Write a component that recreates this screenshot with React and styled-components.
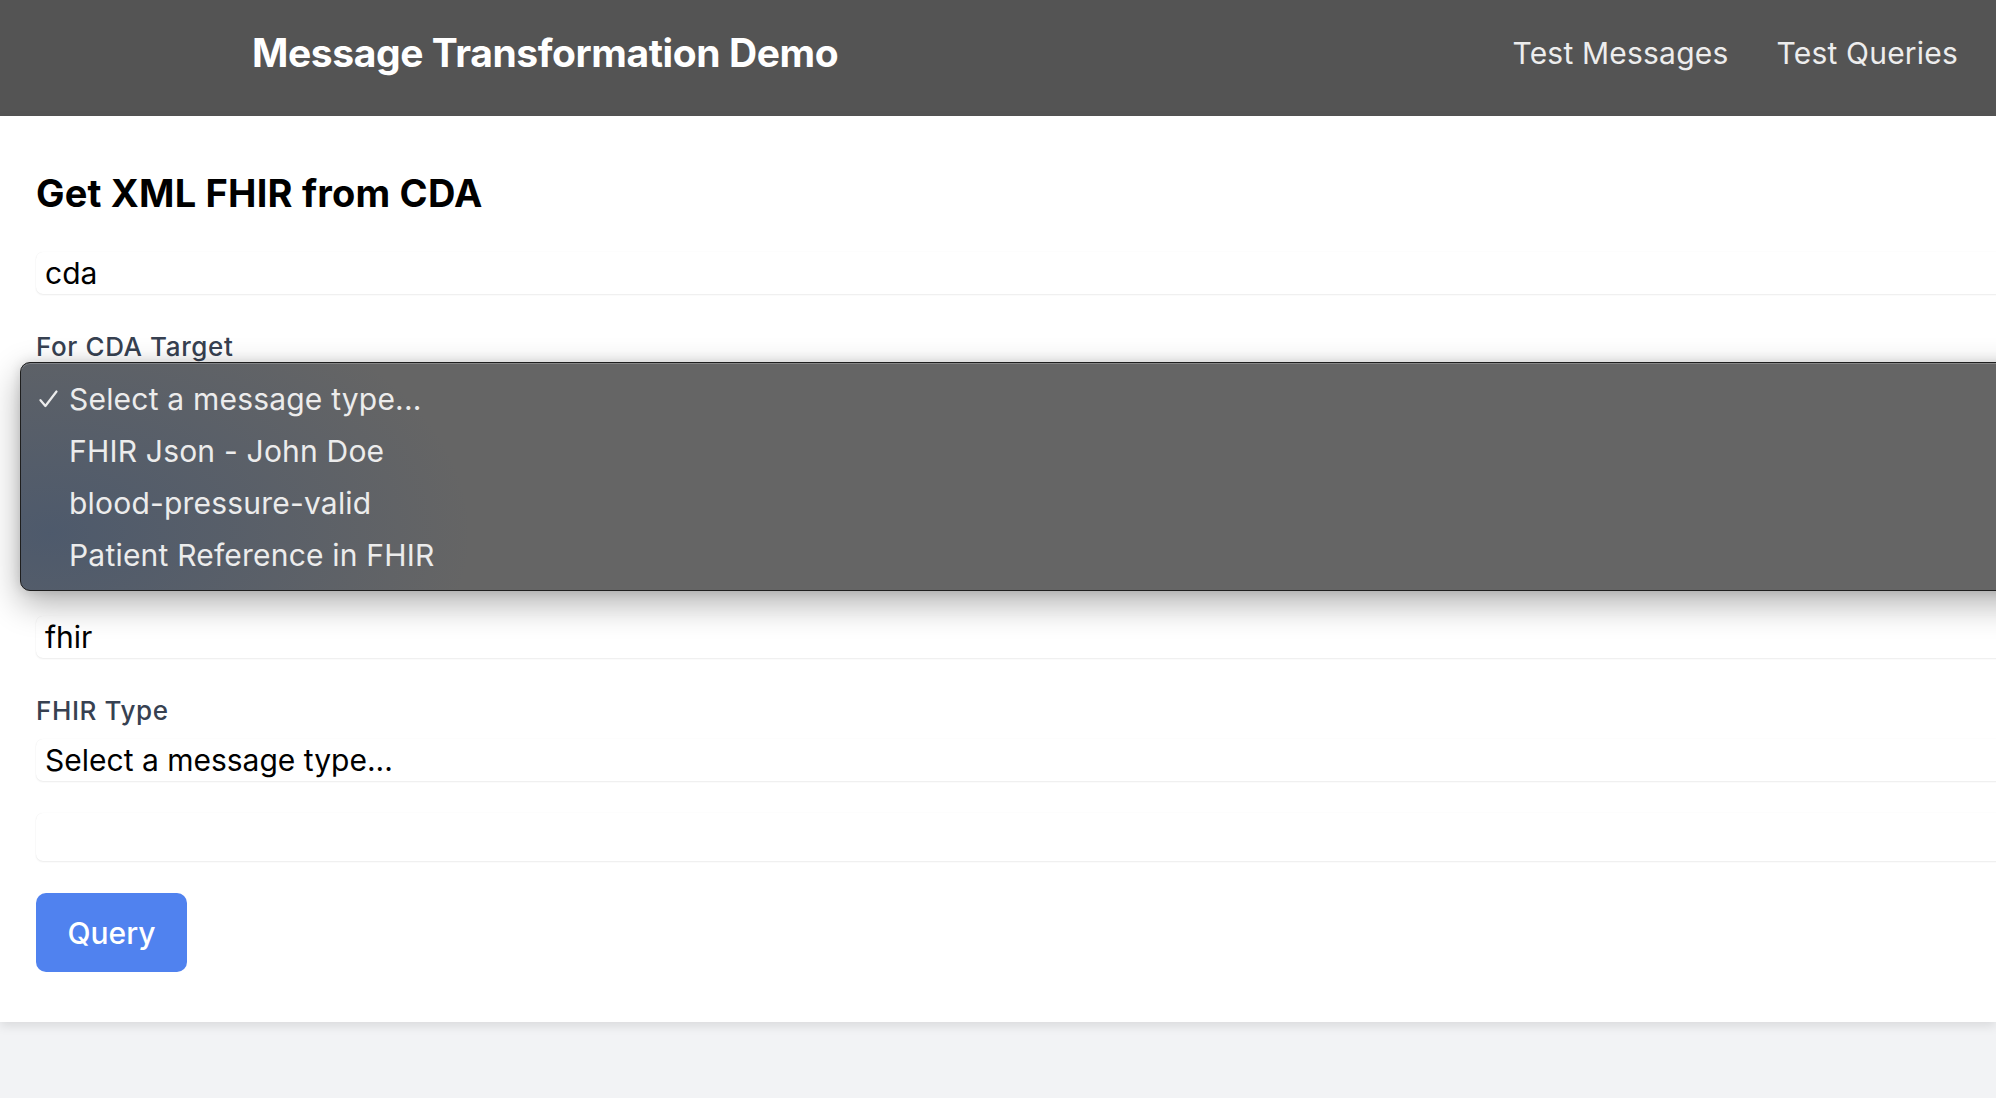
import React from 'react';
import styled, { createGlobalStyle } from 'styled-components';

const GlobalStyle = createGlobalStyle`
    html, body {
        margin: 0;
        padding: 0;
        background-color: #f2f3f5;
        font-family: Inter, "Noto Sans", "Liberation Sans", sans-serif;
        overflow: hidden;
    }
    * {
        box-sizing: border-box;
    }
`;

const cdaOptions = [
    'Select a message type...',
    'FHIR Json - John Doe',
    'blood-pressure-valid',
    'Patient Reference in FHIR',
];

const CheckIcon = () => (
    <svg width="19" height="18" viewBox="0 0 19 18" fill="none">
        <path d="M1.5 10.2 L6.4 16 L17.5 1.5" stroke="#ececec" strokeWidth="2.2" strokeLinecap="round" strokeLinejoin="round" />
    </svg>
);

const App = () => {
    return (
        <Page>
            <GlobalStyle />
            <Header>
                <Title>Message Transformation Demo</Title>
                <NavLinks>
                    <NavLink href="#messages">Test Messages</NavLink>
                    <NavLink href="#queries">Test Queries</NavLink>
                </NavLinks>
            </Header>
            <Card>
                <Heading>Get XML FHIR from CDA</Heading>
                <Field>cda</Field>
                <Label>For CDA Target</Label>
                <SelectArea>
                    <Field>Select a message type...</Field>
                    <Popup>
                        {cdaOptions.map((option, i) => (
                            <PopupItem key={option}>
                                <Check>{i === 0 && <CheckIcon />}</Check>
                                {option}
                            </PopupItem>
                        ))}
                    </Popup>
                </SelectArea>
                <Field tall />
                <Field>fhir</Field>
                <Label>FHIR Type</Label>
                <Field tight>Select a message type...</Field>
                <Field box />
                <QueryButton>Query</QueryButton>
            </Card>
        </Page>
    );
};

const Page = styled.div`
    min-height: 100vh;
    background-color: #f2f3f5;
`;

const Header = styled.header`
    height: 116px;
    background-color: #545454;
    padding: 0 38px 11px 252px;

    display: flex;
    align-items: center;
    justify-content: space-between;
`;

const Title = styled.h1`
    margin: 0;
    color: #ffffff;
    font-size: 39px;
    font-weight: 700;
    line-height: 44px;
    letter-spacing: -0.4px;
`;

const NavLinks = styled.nav`
    display: flex;
    gap: 48px;
`;

const NavLink = styled.a`
    color: #ededed;
    text-decoration: none;
    font-size: 30px;
    line-height: 36px;
    letter-spacing: 0.2px;
`;

const Card = styled.main`
    background-color: #ffffff;
    padding: 56px 0 50px 36px;
    box-shadow: 0 4px 10px rgba(0, 0, 0, 0.1);
    overflow: hidden;

    display: flex;
    flex-direction: column;
    align-items: flex-start;
`;

const Heading = styled.h2`
    margin: 0 0 38px;
    color: #000000;
    font-size: 38px;
    font-weight: 700;
    line-height: 42px;
    letter-spacing: 0.2px;
`;

const Field = styled.div`
    width: calc(100% + 40px);
    height: ${props => (props.tall ? '135px' : props.box ? '48px' : '42px')};
    margin-bottom: ${props => (props.tight || props.box || props.tall ? '32px' : '39px')};
    padding: 0 9px;
    border-radius: 7px;
    background-color: #ffffff;
    box-shadow: 0 1px 2px rgba(0, 0, 0, 0.07), 0 0 1px rgba(0, 0, 0, 0.08);
    color: #000000;
    font-size: 30px;
    line-height: 42px;
`;

const Label = styled.label`
    display: block;
    margin-bottom: 14px;
    color: #374151;
    font-size: 26px;
    font-weight: 500;
    line-height: 28px;
    letter-spacing: 0.6px;
`;

const SelectArea = styled.div`
    position: relative;
    width: 100%;

    & > ${Field} {
        margin-bottom: 32px;
    }
`;

const Popup = styled.ul`
    position: absolute;
    top: -13px;
    left: -16px;
    width: calc(100% + 60px);
    height: 229px;
    margin: 0;
    padding: 10px 0 0;
    list-style: none;
    border: 1px solid #1e1e1e;
    border-radius: 10px;
    background:
        radial-gradient(ellipse 420px 260px at 30px 75%, rgba(70, 86, 110, 0.75), rgba(70, 86, 110, 0) 100%),
        #656565;
    box-shadow: inset 0 1px 0 rgba(255, 255, 255, 0.22), 0 12px 34px rgba(0, 0, 0, 0.32), 0 0 12px rgba(0, 0, 0, 0.12);
    z-index: 2;
`;

const PopupItem = styled.li`
    display: flex;
    align-items: center;
    height: 52px;
    padding-left: 18px;
    color: #ececec;
    font-size: 30px;
    line-height: 52px;
    letter-spacing: 0.2px;
`;

const Check = styled.span`
    display: inline-flex;
    align-items: center;
    width: 30px;
    height: 52px;
`;

const QueryButton = styled.button`
    width: 151px;
    height: 79px;
    border: none;
    border-radius: 10px;
    background-color: #5082ef;
    color: #ffffff;
    font-family: inherit;
    font-size: 30px;
    font-weight: 500;
    cursor: pointer;
`;

export default App;
